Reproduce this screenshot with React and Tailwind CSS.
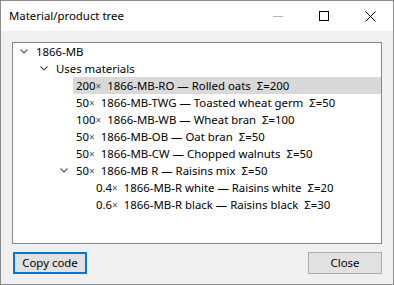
import React from 'react';

const rows = [
  { level: 0, open: true, label: '1866-MB' },
  { level: 1, open: true, label: 'Uses materials' },
  { level: 2, qty: '200', code: '1866-MB-RO', name: 'Rolled oats', sum: '200', selected: true },
  { level: 2, qty: '50', code: '1866-MB-TWG', name: 'Toasted wheat germ', sum: '50' },
  { level: 2, qty: '100', code: '1866-MB-WB', name: 'Wheat bran', sum: '100' },
  { level: 2, qty: '50', code: '1866-MB-OB', name: 'Oat bran', sum: '50' },
  { level: 2, qty: '50', code: '1866-MB-CW', name: 'Chopped walnuts', sum: '50' },
  { level: 2, open: true, qty: '50', code: '1866-MB R', name: 'Raisins mix', sum: '50' },
  { level: 3, qty: '0.4', code: '1866-MB-R white', name: 'Raisins white', sum: '20' },
  { level: 3, qty: '0.6', code: '1866-MB-R black', name: 'Raisins black', sum: '30' },
];

// small grey chevron used by the tree view
function Chevron() {
  return (
    <svg width="8" height="5" viewBox="0 0 8 5" className="block">
      <path d="M0.5 0.5 L4 4 L7.5 0.5" fill="none" stroke="#5a5a5a" strokeWidth="1.2" />
    </svg>
  );
}

function Row({ row }) {
  return (
    <div className="h-[17px] flex items-center" style={{ paddingLeft: 7 + row.level * 20 }}>
      <div className="w-[13px] h-[17px] flex items-center shrink-0">
        {row.open && <Chevron />}
      </div>
      <div
        className={
          'h-[17px] flex items-center pl-[3px] whitespace-pre ' +
          (row.selected ? 'bg-[#d9d9d9] flex-1' : '')
        }
      >
        {row.qty ? (
          <span>
            {row.qty}
            <span className="text-[10px] text-[#555]">×</span>
            {'  '}
            {row.code} — {row.name}{'  '}Σ={row.sum}
          </span>
        ) : (
          <span>{row.label}</span>
        )}
      </div>
    </div>
  );
}

export default function App() {
  return (
    <div className="w-[394px] h-[285px] border border-[#8c8c8c] flex flex-col text-[11.4px] text-black font-['Segoe_UI','Noto_Sans',sans-serif] leading-none">
      <div className="h-[30px] bg-white flex items-center shrink-0">
        <span className="ml-[8px]">Material/product tree</span>
        <div className="ml-auto flex items-center h-full">
          <div className="w-[46px] h-full flex items-center justify-center">
            <div className="w-[10px] h-px bg-[#b4b4b4]" />
          </div>
          <div className="w-[46px] h-full flex items-center justify-center">
            <div className="w-[10px] h-[10px] border border-black" />
          </div>
          <div className="w-[46px] h-full flex items-center justify-center">
            <svg width="11" height="11" viewBox="0 0 11 11">
              <path d="M0.5 0.5 L10.5 10.5 M10.5 0.5 L0.5 10.5" stroke="#000" strokeWidth="1" />
            </svg>
          </div>
        </div>
      </div>
      <div className="flex-1 bg-[#f0f0f0] flex flex-col px-[11px] pt-[11px] pb-[10px]">
        <div className="h-[202px] bg-white border border-[#828790] overflow-hidden">
          {rows.map((r, i) => (
            <Row key={i} row={r} />
          ))}
        </div>
        <div className="mt-[8px] flex justify-between">
          <button className="w-[74px] h-[22px] ml-px bg-[#e1e1e1] border-2 border-[#0078d7] flex items-center justify-center">
            Copy code
          </button>
          <button className="w-[74px] h-[22px] bg-[#e1e1e1] border border-[#adadad] flex items-center justify-center">
            Close
          </button>
        </div>
      </div>
    </div>
  );
}
